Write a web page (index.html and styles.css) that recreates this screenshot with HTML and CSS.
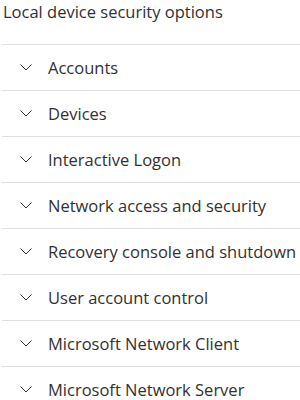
FILE: index.html
```html
<!DOCTYPE html>
<html>
<head>
<meta charset="utf-8">
<link rel="stylesheet" href="styles.css">
</head>
<body>
<div class="panel">
  <div class="title">Local device security options</div>
  <ul class="list">
    <li class="row"><svg class="chev" viewBox="0 0 12 7"><path d="M0.5 0.5 L6 6 L11.5 0.5"/></svg><span>Accounts</span></li>
    <li class="row"><svg class="chev" viewBox="0 0 12 7"><path d="M0.5 0.5 L6 6 L11.5 0.5"/></svg><span>Devices</span></li>
    <li class="row"><svg class="chev" viewBox="0 0 12 7"><path d="M0.5 0.5 L6 6 L11.5 0.5"/></svg><span>Interactive Logon</span></li>
    <li class="row"><svg class="chev" viewBox="0 0 12 7"><path d="M0.5 0.5 L6 6 L11.5 0.5"/></svg><span>Network access and security</span></li>
    <li class="row"><svg class="chev" viewBox="0 0 12 7"><path d="M0.5 0.5 L6 6 L11.5 0.5"/></svg><span>Recovery console and shutdown</span></li>
    <li class="row"><svg class="chev" viewBox="0 0 12 7"><path d="M0.5 0.5 L6 6 L11.5 0.5"/></svg><span>User account control</span></li>
    <li class="row"><svg class="chev" viewBox="0 0 12 7"><path d="M0.5 0.5 L6 6 L11.5 0.5"/></svg><span>Microsoft Network Client</span></li>
    <li class="row"><svg class="chev" viewBox="0 0 12 7"><path d="M0.5 0.5 L6 6 L11.5 0.5"/></svg><span>Microsoft Network Server</span></li>
  </ul>
</div>
</body>
</html>
```
FILE: styles.css
```css
html, body {
  margin: 0;
  padding: 0;
  background: #ffffff;
}
body {
  font-family: "Open Sans", "Noto Sans", sans-serif;
  color: #323130;
  width: 300px;
  height: 400px;
  overflow: hidden;
}
.panel {
  padding-left: 2px;
}
.title {
  font-size: 16.5px;
  line-height: 22px;
  padding: 1px 0 0 1px;
  height: 45px;
  box-sizing: border-box;
  border-bottom: 1px solid #e1dfdd;
}
.list {
  list-style: none;
  margin: 0;
  padding: 0;
}
.row {
  display: flex;
  align-items: center;
  height: 46px;
  box-sizing: border-box;
  border-bottom: 1px solid #e1dfdd;
  font-size: 16.5px;
  padding-left: 18px;
  padding-top: 0;
}
.chev {
  width: 12px;
  height: 7px;
  fill: none;
  stroke: #323130;
  stroke-width: 1;
  margin-right: 16px;
  flex: none;
}
.row span {
  white-space: nowrap;
}
```
